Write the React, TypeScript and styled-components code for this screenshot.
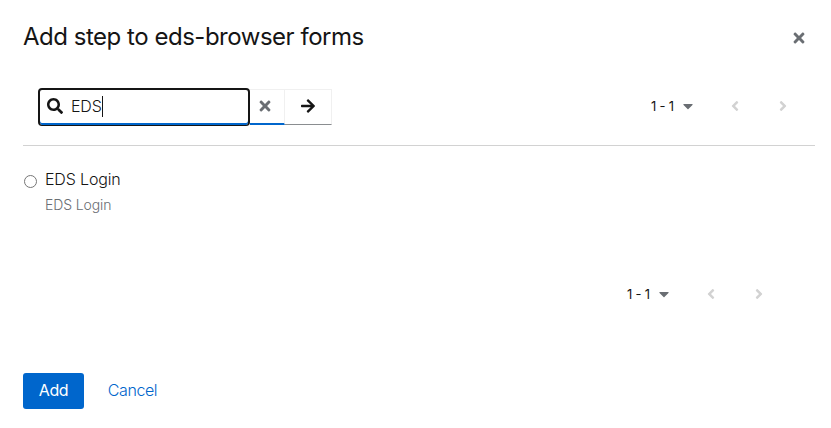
import React from "react";
import styled, { createGlobalStyle } from "styled-components";
import { FaAngleLeft, FaAngleRight, FaArrowRight, FaCaretDown, FaSearch, FaTimes } from "react-icons/fa";

const GlobalStyle = createGlobalStyle`
  * { box-sizing: border-box; }
  body { margin: 0; background: #fff; }
`;

const Modal = styled.main`
  display: flex;
  flex-direction: column;
  width: 831px;
  height: 428px;
  padding: 0 16px 0 23px;
  background: #fff;
  color: #151515;
  font-family: Inter, "Liberation Sans", sans-serif;
  font-size: 16px;
`;

const Header = styled.header`
  display: flex;
  align-items: center;
  justify-content: space-between;
  height: 74px;
`;

const Title = styled.h1`
  margin: 0;
  font-size: 24px;
  font-weight: 400;
  line-height: 32px;
  letter-spacing: -0.48px;
  white-space: nowrap;
`;

const PlainButton = styled.button`
  display: flex;
  align-items: center;
  justify-content: center;
  width: 32px;
  height: 32px;
  padding: 2px 0 0;
  border: 0;
  background: none;
  color: #6a6e73;
  font-size: 16px;
`;

const Toolbar = styled.div`
  display: flex;
  align-items: flex-start;
  justify-content: space-between;
  height: 72px;
  padding: 14px 8px 0 15px;
  border-bottom: 1px solid #d2d2d2;
`;

const SearchGroup = styled.div`
  display: flex;
  align-items: flex-start;
`;

const SearchField = styled.div`
  display: flex;
  align-items: center;
  width: 212px;
  height: 38px;
  padding: 0 7px 3px;
  border: 2px solid #151515;
  border-bottom-width: 1px;
  border-radius: 4px;
  box-shadow: inset 0 -2px #06c;
  font-size: 16px;
  font-weight: 300;
  svg { flex: none; }
`;

const Query = styled.span`
  margin-left: 8px;
  letter-spacing: -0.15px;
`;

const Caret = styled.span`
  width: 1px;
  height: 21px;
  background: #151515;
`;

const ClearButton = styled.button`
  display: flex;
  align-items: center;
  justify-content: center;
  width: 35px;
  height: 36px;
  margin-top: 1px;
  padding: 0 5px 2px 0;
  border: solid #f0f0f0;
  border-width: 1px 1px 2px 0;
  border-bottom-color: #06c;
  background: none;
  color: #6a6e73;
  font-size: 16px;
`;

const SubmitButton = styled.button`
  display: flex;
  align-items: center;
  justify-content: center;
  width: 47px;
  height: 36px;
  margin-top: 1px;
  padding: 0 0 2px;
  border: solid #f0f0f0;
  border-width: 1px 1px 1px 0;
  border-bottom-color: #8a8d90;
  background: none;
  color: #151515;
  font-size: 16px;
`;

const Pages = styled.nav`
  display: flex;
  align-items: center;
  height: 36px;
  color: #151515;
  font-size: 14px;
`;

const Range = styled.span`
  width: 25px;
  margin-right: 6px;
  font-size: 13px;
  letter-spacing: -0.2px;
  white-space: nowrap;
`;

const CaretSlot = styled.span`
  display: flex;
  justify-content: center;
  width: 12px;
  margin-right: 17px;
  color: #6a6e73;
  font-size: 16px;
`;

const PageButton = styled.button`
  display: flex;
  align-items: center;
  justify-content: center;
  width: 48px;
  height: 36px;
  padding: 0;
  border: 0;
  background: none;
  color: #d2d2d2;
  font-size: 16px;
`;

const Option = styled.label`
  display: grid;
  grid-template-columns: 13px 1fr;
  align-content: start;
  column-gap: 8px;
  height: 78px;
  padding: 21px 0 0 1px;
  font-weight: 300;
`;

const Radio = styled.input`
  appearance: none;
  width: 13px;
  height: 13px;
  margin: 8px 0 0;
  border: 1px solid #767676;
  border-radius: 50%;
  background: #fff;
`;

const OptionName = styled.span`
  line-height: 25px;
  letter-spacing: -0.15px;
`;

const OptionDetail = styled.span`
  grid-column: 2;
  color: #6a6e73;
  font-size: 14px;
  line-height: 26px;
  letter-spacing: -0.1px;
`;

const BottomPagination = styled.div`
  display: flex;
  justify-content: flex-end;
  margin-top: 52px;
  padding-right: 32px;
`;

const Footer = styled.footer`
  display: flex;
  margin-top: 61px;
`;

const ActionButton = styled.button<{ $primary?: boolean }>`
  height: 36px;
  width: ${({ $primary }) => ($primary ? "61px" : "97px")};
  padding: 0 0 2px;
  border: 0;
  border-radius: 3px;
  background: ${({ $primary }) => ($primary ? "#06c" : "transparent")};
  color: ${({ $primary }) => ($primary ? "#fff" : "#06c")};
  font: ${({ $primary }) => ($primary ? 400 : 300)} 16px/24px Inter, sans-serif;
  letter-spacing: -0.4px;
`;

function Pagination() {
  return (
    <Pages aria-label="Pagination">
      <Range>1 - 1</Range>
      <CaretSlot><FaCaretDown /></CaretSlot>
      <PageButton disabled aria-label="Previous"><FaAngleLeft /></PageButton>
      <PageButton disabled aria-label="Next"><FaAngleRight /></PageButton>
    </Pages>
  );
}

export default function App() {
  return (
    <>
      <GlobalStyle />
      <Modal>
        <Header>
          <Title>Add step to eds-browser forms</Title>
          <PlainButton aria-label="Close"><FaTimes /></PlainButton>
        </Header>
        <Toolbar>
          <SearchGroup>
            <SearchField>
              <FaSearch />
              <Query>EDS</Query>
              <Caret />
            </SearchField>
            <ClearButton aria-label="Clear"><FaTimes /></ClearButton>
            <SubmitButton aria-label="Search"><FaArrowRight /></SubmitButton>
          </SearchGroup>
          <Pagination />
        </Toolbar>
        <Option>
          <Radio type="radio" name="step" />
          <OptionName>EDS Login</OptionName>
          <OptionDetail>EDS Login</OptionDetail>
        </Option>
        <BottomPagination><Pagination /></BottomPagination>
        <Footer>
          <ActionButton $primary>Add</ActionButton>
          <ActionButton>Cancel</ActionButton>
        </Footer>
      </Modal>
    </>
  );
}
